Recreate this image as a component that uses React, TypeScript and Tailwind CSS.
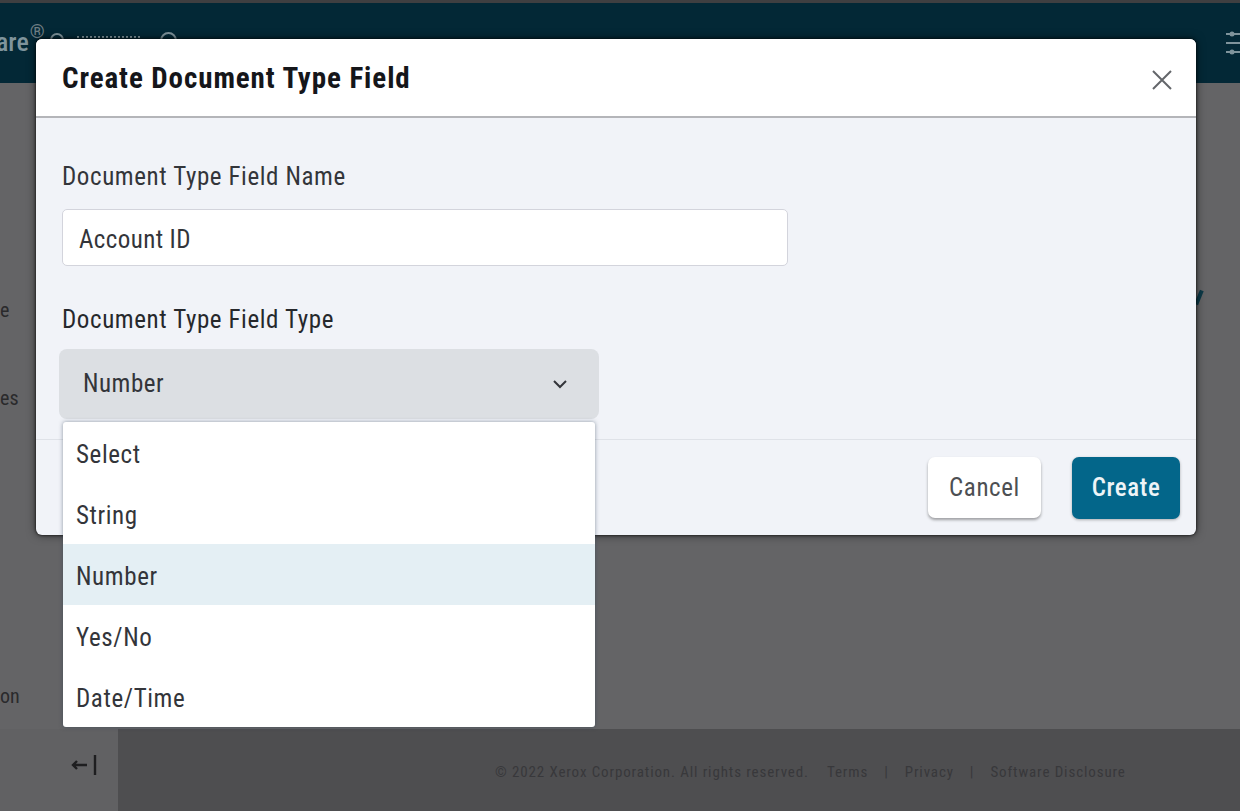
import React from "react";

const font = { fontFamily: "Roboto, 'Liberation Sans', sans-serif" };

function Sliders() {
  return (
    <svg width="16" height="30" viewBox="0 0 16 30" fill="none" stroke="#7f949c" strokeWidth="2">
      <path d="M2 4h14M2 13h14M2 22h14" />
      <circle cx="8" cy="4" r="2.5" fill="#7f949c" stroke="none" />
      <circle cx="8" cy="22" r="2.5" fill="#7f949c" stroke="none" />
    </svg>
  );
}

export default function App() {
  const options = ["Select", "String", "Number", "Yes/No", "Date/Time"];
  return (
    <div className="relative w-[1240px] h-[811px] overflow-hidden flex flex-col bg-[#646466] [font-stretch:75%]" style={font}>
      <div className="h-[3px] bg-[#3f3f41]" />
      <header className="h-[80px] bg-[#032836] flex items-start justify-between">
        <div className="flex items-start">
          <span className="mt-[24px] -ml-[4px] text-[26px] font-medium leading-[30px] text-[#7f949c]">are</span>
          <span className="mt-[21px] ml-[1px] text-[19px] leading-4 text-[#6f7f85]">®</span>
          <span className="mt-[30px] ml-[5px] w-[14px] h-[14px] rounded-full border-2 border-[#7f949c]" />
          <span className="mt-[33px] ml-[13px] h-[8px] w-[63px] border-t-2 border-dotted border-[#7f949c]" />
          <span className="mt-[29px] ml-[20px] w-[17px] h-[17px] rounded-full border-2 border-[#7f949c]" />
        </div>
        <span className="mt-[27px]"><Sliders /></span>
      </header>
      <main className="flex-1 flex flex-col pt-[215px] text-[#2a2a2c] text-[20px] leading-6">
        <span className="h-[88px]">e</span>
        <span className="h-[298px]">es</span>
        <span>on</span>
      </main>
      <footer className="h-[82px] flex bg-[#4e4e50]">
        <div className="w-[118px] bg-[#616163] flex items-center justify-end pr-[21px] pb-[10px]">
          <svg width="26" height="24" viewBox="0 0 26 24" fill="none" stroke="#1e1e20" strokeWidth="2">
            <path d="M2 12h14M6 8l-4 4 4 4M24 2v20" strokeWidth="2.4" />
          </svg>
        </div>
        <div className="flex-1 flex items-center gap-[16px] pl-[377px] pt-[4px] text-[15px] tracking-[0.88px] text-[#38383b]">
          <span>© 2022 Xerox Corporation. All rights reserved.</span>
          <span className="ml-[2px]">Terms</span>
          <span>|</span>
          <span>Privacy</span>
          <span>|</span>
          <span>Software Disclosure</span>
        </div>
      </footer>

      <div className="absolute left-[1197px] top-[290px] w-[4px] h-[15px] rotate-[22deg] bg-[#0d3a48]" />

      <div className="absolute left-[36px] top-[39px] w-[1160px] h-[496px] rounded-[6px] bg-[#f1f3f8] overflow-hidden flex flex-col shadow-[0_0_3px_rgba(0,0,0,0.9),0_0_10px_rgba(0,0,0,0.55)]">
        <div className="h-[79px] shrink-0 bg-white border-b-2 border-[#b4b5b9] flex items-center justify-between pl-[26px] pr-[24px]">
          <h1 className="text-[29px] font-bold tracking-[0.92px] text-[#15161a] leading-none pt-[2px]">Create Document Type Field</h1>
          <svg className="mt-[4px]" width="20" height="20" viewBox="0 0 20 20" fill="none" stroke="#63666a" strokeWidth="2">
            <path d="M1 1l18 18M19 1L1 19" />
          </svg>
        </div>
        <div className="flex-1 flex flex-col px-[26px] pt-[44px] tracking-[0.6px]">
          <label className="text-[25px] leading-[30px] text-[#33353a]">Document Type Field Name</label>
          <div className="mt-[17px] w-[726px] h-[57px] rounded-[5px] bg-white border border-[#d3d4dc] flex items-center pl-[16px] pt-[4px] text-[25px] tracking-[0.4px] text-[#33353a]">
            Account ID
          </div>
          <label className="mt-[39px] text-[25px] leading-[30px] text-[#26282c]">Document Type Field Type</label>
          <div className="mt-[14px] -ml-[3px] w-[540px] h-[70px] rounded-[8px] bg-[#dcdfe3] flex items-center justify-between pl-[24px] pr-[31px] text-[25px] tracking-[0.5px] text-[#33353a]">
            Number
            <svg width="16" height="10" viewBox="0 0 16 10" fill="none" stroke="#33353a" strokeWidth="2">
              <path d="M2 2l6 6 6-6" />
            </svg>
          </div>
        </div>
        <div className="h-[96px] shrink-0 border-t border-[#dfe2e8] flex items-center justify-end gap-[31px] pr-[16px] tracking-[0.6px]">
          <button className="w-[113px] h-[61px] rounded-[7px] bg-white text-[25px] pt-[1px] text-[#4d4f53] shadow-[0_2px_3px_rgba(0,0,0,0.35)]">Cancel</button>
          <button className="w-[108px] h-[62px] rounded-[7px] bg-[#03668a] text-[25px] pt-[1px] font-medium text-[#eef4f7] shadow-[0_1px_3px_rgba(0,0,0,0.3)]">Create</button>
        </div>
      </div>

      <ul className="absolute left-[63px] top-[422px] w-[532px] h-[305px] rounded-[3px] bg-white shadow-[0_0_4px_rgba(40,60,80,0.5)] flex flex-col tracking-[0.6px]">
        {options.map((o) => (
          <li
            key={o}
            className={`h-[61px] flex items-center pl-[13px] pt-[5px] text-[25px] text-[#33353a] ${o === "Number" ? "bg-[#e4eff4]" : ""}`}
          >
            {o}
          </li>
        ))}
      </ul>
    </div>
  );
}
